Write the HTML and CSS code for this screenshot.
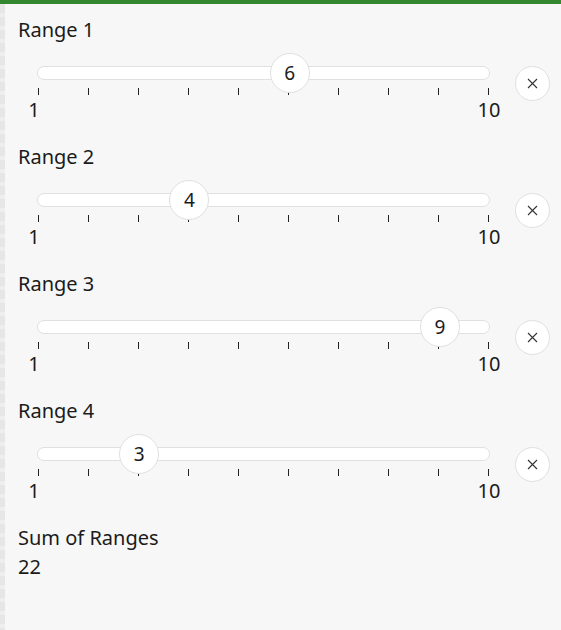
FILE: index.html
```html
<!DOCTYPE html>
<html lang="en">
<head>
    <meta charset="UTF-8">
    <meta name="viewport" content="width=device-width, initial-scale=1.0">
    <title>Ranges</title>
    <link rel="stylesheet" href="styles.css">
</head>
<body>
    <div class="topbar"></div>
    <div class="page">
        <div class="gutter"></div>
        <div class="main">
            <div class="range-row">
                <div class="range-label">Range 1</div>
                <div class="range-line">
                    <div class="slider">
                        <div class="track">
                            <div class="thumb" style="left: 55.56%">6</div>
                        </div>
                        <div class="ticks">
                            <span></span><span></span><span></span><span></span><span></span>
                            <span></span><span></span><span></span><span></span><span></span>
                        </div>
                        <div class="scale"><span>1</span><span>10</span></div>
                    </div>
                    <button class="close-button" aria-label="Remove">
                        <svg width="11" height="11" viewBox="0 0 11 11"><path d="M1 1L10 10M10 1L1 10" stroke="#333" stroke-width="1.1" fill="none"/></svg>
                    </button>
                </div>
            </div>

            <div class="range-row">
                <div class="range-label">Range 2</div>
                <div class="range-line">
                    <div class="slider">
                        <div class="track">
                            <div class="thumb" style="left: 33.33%">4</div>
                        </div>
                        <div class="ticks">
                            <span></span><span></span><span></span><span></span><span></span>
                            <span></span><span></span><span></span><span></span><span></span>
                        </div>
                        <div class="scale"><span>1</span><span>10</span></div>
                    </div>
                    <button class="close-button" aria-label="Remove">
                        <svg width="11" height="11" viewBox="0 0 11 11"><path d="M1 1L10 10M10 1L1 10" stroke="#333" stroke-width="1.1" fill="none"/></svg>
                    </button>
                </div>
            </div>

            <div class="range-row">
                <div class="range-label">Range 3</div>
                <div class="range-line">
                    <div class="slider">
                        <div class="track">
                            <div class="thumb" style="left: 88.89%">9</div>
                        </div>
                        <div class="ticks">
                            <span></span><span></span><span></span><span></span><span></span>
                            <span></span><span></span><span></span><span></span><span></span>
                        </div>
                        <div class="scale"><span>1</span><span>10</span></div>
                    </div>
                    <button class="close-button" aria-label="Remove">
                        <svg width="11" height="11" viewBox="0 0 11 11"><path d="M1 1L10 10M10 1L1 10" stroke="#333" stroke-width="1.1" fill="none"/></svg>
                    </button>
                </div>
            </div>

            <div class="range-row">
                <div class="range-label">Range 4</div>
                <div class="range-line">
                    <div class="slider">
                        <div class="track">
                            <div class="thumb" style="left: 22.22%">3</div>
                        </div>
                        <div class="ticks">
                            <span></span><span></span><span></span><span></span><span></span>
                            <span></span><span></span><span></span><span></span><span></span>
                        </div>
                        <div class="scale"><span>1</span><span>10</span></div>
                    </div>
                    <button class="close-button" aria-label="Remove">
                        <svg width="11" height="11" viewBox="0 0 11 11"><path d="M1 1L10 10M10 1L1 10" stroke="#333" stroke-width="1.1" fill="none"/></svg>
                    </button>
                </div>
            </div>

            <div class="sum">
                <div class="sum-label">Sum of Ranges</div>
                <div class="sum-value">22</div>
            </div>
        </div>
    </div>
</body>
</html>
```

FILE: styles.css
```css
:root {
    --accent: #35872f;
    --background-color: #f7f7f7;
    --text-color: #1b1b1b;
    --border-color: #e0e0e0;
}

html, body {
    margin: 0;
    height: 100%;
}

body {
    font-family: 'Noto Sans', 'Open Sans', sans-serif;
    font-size: 20px;
    line-height: 24px;
    background-color: var(--background-color);
    color: var(--text-color);
    display: flex;
    flex-direction: column;
}

.topbar {
    height: 4px;
    background-color: var(--accent);
}

.page {
    flex: 1;
    display: flex;
}

.gutter {
    width: 5px;
    background: repeating-linear-gradient(
        to bottom,
        #e6e6e6 0,
        #e6e6e6 9px,
        #eeeeee 9px,
        #eeeeee 13px
    );
}

.main {
    flex: 1;
    padding: 14px 0 0 13px;
}

.range-row {
    margin-bottom: 23px;
}

.range-line {
    display: flex;
    align-items: flex-start;
    margin-top: 24px;
}

.slider {
    width: 453px;
    margin-left: 19px;
}

.track {
    position: relative;
    height: 12px;
    background-color: #ffffff;
    border: 1px solid var(--border-color);
    border-radius: 7px;
}

.thumb {
    position: absolute;
    top: 50%;
    width: 38px;
    height: 38px;
    margin-left: 1px;
    transform: translate(-50%, -50%);
    background-color: #ffffff;
    border: 1px solid var(--border-color);
    border-radius: 50%;
    display: flex;
    align-items: center;
    justify-content: center;
    font-size: 19px;
    z-index: 1;
}

.ticks {
    display: flex;
    justify-content: space-between;
    margin: 8px 1px 0 1px;
    height: 7px;
}

.ticks span {
    width: 1px;
    background-color: #222;
}

.scale {
    display: flex;
    justify-content: space-between;
    margin: 3px 1px 0 1px;
}

.scale span {
    width: 0;
    display: flex;
    justify-content: center;
    white-space: nowrap;
}

.scale span:first-child {
    margin-left: -4px;
}

.close-button {
    width: 35px;
    height: 35px;
    margin-left: 25px;
    padding: 0;
    background-color: #ffffff;
    border: 1px solid var(--border-color);
    border-radius: 50%;
    display: flex;
    align-items: center;
    justify-content: center;
    cursor: pointer;
}

.sum {
    margin-top: 0;
}

.sum-value {
    margin-top: 5px;
}
```
